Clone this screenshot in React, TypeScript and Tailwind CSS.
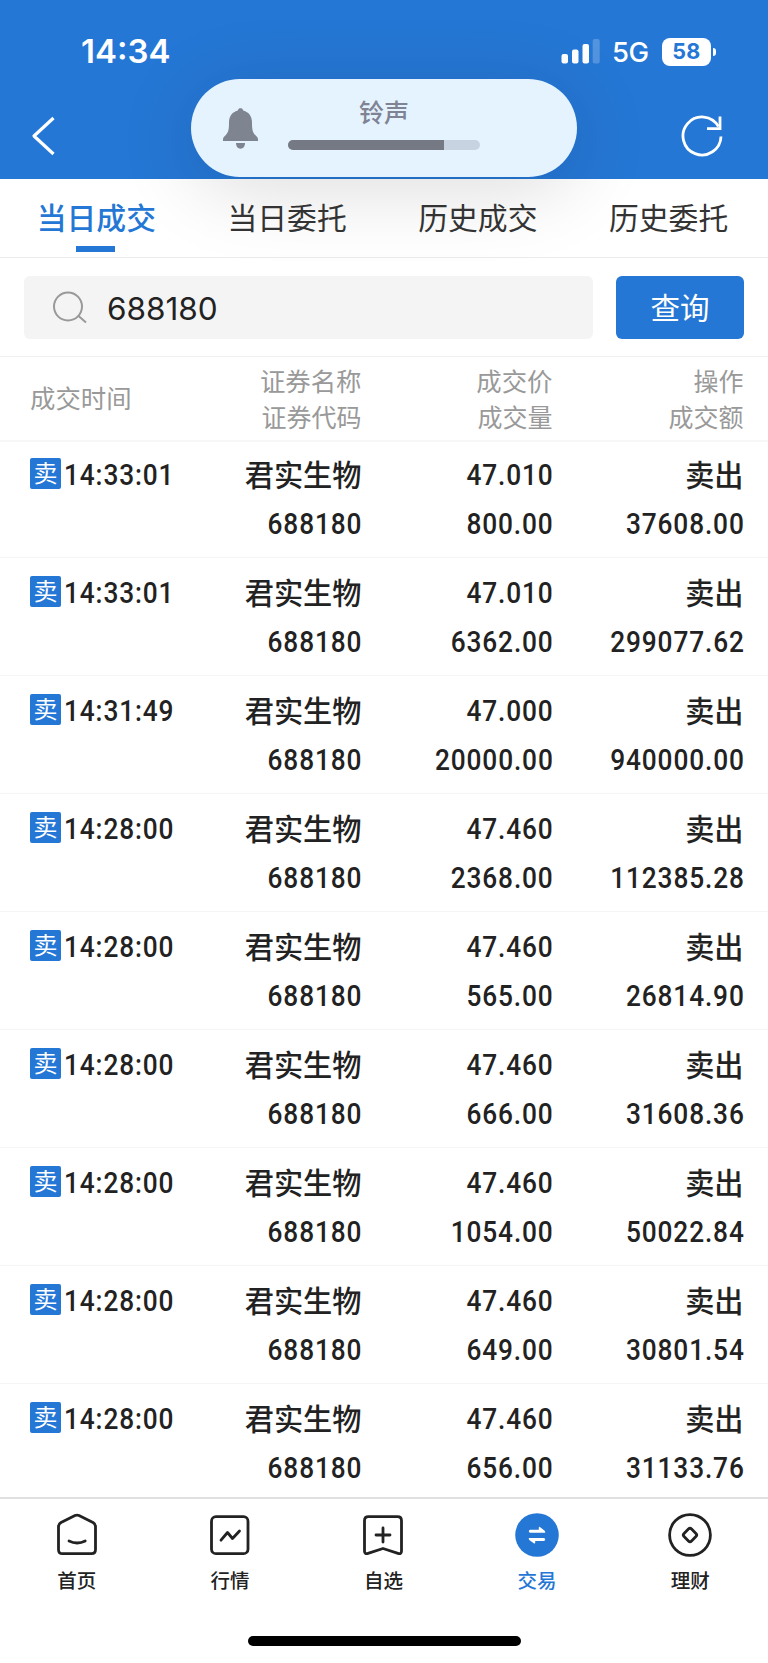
import React from 'react';

const trades = [
  { time: '14:33:01', price: '47.010', volume: '800.00', amount: '37608.00' },
  { time: '14:33:01', price: '47.010', volume: '6362.00', amount: '299077.62' },
  { time: '14:31:49', price: '47.000', volume: '20000.00', amount: '940000.00' },
  { time: '14:28:00', price: '47.460', volume: '2368.00', amount: '112385.28' },
  { time: '14:28:00', price: '47.460', volume: '565.00', amount: '26814.90' },
  { time: '14:28:00', price: '47.460', volume: '666.00', amount: '31608.36' },
  { time: '14:28:00', price: '47.460', volume: '1054.00', amount: '50022.84' },
  { time: '14:28:00', price: '47.460', volume: '649.00', amount: '30801.54' },
  { time: '14:28:00', price: '47.460', volume: '656.00', amount: '31133.76' },
];

const tabs = ['当日成交', '当日委托', '历史成交', '历史委托'];

const Num: React.FC<{ children: React.ReactNode; left?: boolean }> = ({ children, left }) => (
  <span
    className={`inline-block h-[49px] scale-x-[0.875] align-top font-['Roboto',sans-serif] text-[30px] font-medium leading-[51px] tracking-[1px] ${
      left ? 'origin-left' : '-mr-px origin-right'
    }`}
  >
    {children}
  </span>
);

const StatusBar: React.FC = () => (
  <div className="flex h-[79px] items-start justify-between pl-[81px] pr-[52px] pt-[31px] font-['Inter',sans-serif] text-white">
    <span className="text-[33px] font-semibold leading-[41px]">14:34</span>
    <div className="flex h-[41px] items-center">
      <svg width="39" height="25" viewBox="0 0 39 25" fill="currentColor" aria-hidden>
        <rect x="0.5" y="15" width="6.5" height="9.5" rx="2" />
        <rect x="11" y="10.5" width="6.5" height="14" rx="2" />
        <rect x="21.5" y="5" width="6.5" height="19.5" rx="2" />
        <rect x="31.7" y="0" width="7" height="24.5" rx="2" opacity="0.22" />
      </svg>
      <span className="ml-3 mt-0.5 w-[37px] text-[27.5px] font-medium leading-none tracking-[-0.5px]">5G</span>
      <div className="ml-[13px] flex h-7 w-[49px] items-center justify-center rounded-[8px] bg-white text-[21.5px] font-bold leading-none tracking-[0.3px] text-[#2577d5]">
        58
      </div>
      <div className="ml-0.5 h-2 w-[3px] rounded-r-full bg-white" />
    </div>
  </div>
);

const VolumePill: React.FC = () => (
  <div className="absolute left-[191px] top-[79px] z-10 flex h-[98px] w-[386px] rounded-[49px] bg-[#e5f3ff] shadow-[0_12px_80px_rgba(0,0,0,0.14)]">
    <svg className="ml-8 mt-[29px] shrink-0" width="35" height="41" viewBox="0 0 35 41" fill="#7f8491" aria-hidden>
      <path d="M14.8 2.5C15.2.8 16.2.2 17.500.2s2.300.6 2.700 2.300C26 4 29 8.500 29 14.500c0 8 .8 10.500 4.400 13.700 1.300 1.200 1.600 2.200 1.600 3.400v1.400H0v-1.400c0-1.200.3-2.200 1.600-3.400C5.200 25 6 22.500 6 14.500c0-6 3-10.500 8.800-12Z" />
      <path d="M13 35h9c0 3.500-1.800 5.700-4.500 5.700S13 38.500 13 35Z" />
    </svg>
    <div className="ml-[30px] w-[192px]">
      <div className="mt-[15px] text-center text-[25px] font-medium leading-[34px] text-[#7f8393]">铃声</div>
      <div className="mt-3 h-2.5 overflow-hidden rounded-full bg-[#c7d3e1]">
        <div className="h-full w-[156px] bg-[#747984]" />
      </div>
    </div>
  </div>
);

const HomeIcon = () => (
  <svg width="44" height="44" viewBox="0 0 44 44" fill="none" stroke="currentColor" strokeWidth="2.8" strokeLinejoin="round" strokeLinecap="round">
    <path d="M20 2.600Q22 1.600 24 2.600L38 9.500Q40.500 11 40.500 13.500V36.500Q40.500 40.700 36.500 40.700H7.500Q3.500 40.700 3.500 36.500V13.500Q3.500 11 6 9.500Z" />
    <path d="M14 28q8.200 4 16.200 0" />
  </svg>
);

const ChartIcon = () => (
  <svg width="44" height="44" viewBox="0 0 44 44" fill="none" stroke="currentColor" strokeWidth="2.8" strokeLinejoin="round" strokeLinecap="round">
    <rect x="3.5" y="3.7" width="36.5" height="37" rx="4.5" />
    <path d="M13 27.200l6.500-7.700 5 6 7-7.500" />
  </svg>
);

const WatchIcon = () => (
  <svg width="44" height="44" viewBox="0 0 44 44" fill="none" stroke="currentColor" strokeWidth="2.8" strokeLinejoin="round" strokeLinecap="round">
    <path d="M7.500 3.700H36.500Q40.500 3.700 40.500 7.700V38Q40.500 41.500 37 40.400L22 35.500 7 40.400Q3.500 41.500 3.500 38V7.700Q3.500 3.700 7.500 3.700Z" />
    <path d="M22 15v14M15 22h14" />
  </svg>
);

const TradeIcon = () => (
  <svg width="44" height="44" viewBox="0 0 44 44" fill="none">
    <circle cx="22" cy="22" r="21.8" fill="#2577d5" />
    <g fill="#fff">
      <path d="M15.200 16.700H23.800V14.600Q24 13.300 25.200 14.200L29.400 17.400Q30.300 18.300 30.300 19.700H15.200Q13.800 19.600 13.800 18.200T15.200 16.700Z" />
      <path d="M28.800 28.100H20.200V29.800Q20 31.100 18.800 30.200L14.600 27.200Q13.700 26.500 13.700 25.100H28.800Q30.200 25.200 30.200 26.600T28.800 28.100Z" />
    </g>
  </svg>
);

const WealthIcon = () => (
  <svg width="44" height="44" viewBox="0 0 44 44" fill="none" stroke="currentColor" strokeWidth="2.8" strokeLinejoin="round">
    <circle cx="22" cy="22" r="20.4" />
    <rect x="16.7" y="16.7" width="10.6" height="10.6" rx="2.2" transform="rotate(45 22 22)" />
  </svg>
);

const navItems = [
  { label: '首页', icon: <HomeIcon /> },
  { label: '行情', icon: <ChartIcon /> },
  { label: '自选', icon: <WatchIcon /> },
  { label: '交易', icon: <TradeIcon />, active: true },
  { label: '理财', icon: <WealthIcon /> },
];

export default function App() {
  return (
    <div className="relative flex h-[1663px] w-[768px] flex-col overflow-hidden bg-white font-['Noto_Sans_CJK_SC',sans-serif] text-[#222]">
      <header className="h-[179px] shrink-0 bg-[#2577d5]">
        <StatusBar />
        <div className="flex items-start justify-between pl-[31px] pr-11 pt-9 text-white">
          <svg width="24" height="42" viewBox="0 0 24 42" fill="none" stroke="currentColor" strokeWidth="3.2" aria-hidden>
            <path d="M22.500 3 3 21l19.500 18" strokeLinejoin="round" />
          </svg>
          <svg className="-mt-px" width="43" height="43" viewBox="0 0 43 43" fill="none" stroke="currentColor" strokeWidth="2.8" aria-hidden>
            <path d="M40 22.500A19 19 0 1 1 37.500 12.500" />
            <path d="M39 2.500v12.200H26" />
          </svg>
        </div>
      </header>

      <VolumePill />

      <nav className="grid h-[79px] shrink-0 grid-cols-4 border-b border-[#ebebeb] pl-px pr-1">
        {tabs.map((tab, i) => (
          <div
            key={tab}
            className={
              i === 0
                ? 'flex flex-col items-center text-[#2577d5] font-medium'
                : 'flex flex-col items-center text-[#333]'
            }
          >
            <span className="relative z-20 mt-3.5 text-[29.8px] leading-[46px]">{tab}</span>
            {i === 0 && <span className="-ml-0.5 mt-[7px] h-1.5 w-[39px] bg-[#2577d5]" />}
          </div>
        ))}
      </nav>

      <div className="flex h-[99px] shrink-0 gap-[23px] border-b border-[#f0f0f0] px-6 pt-[18px]">
        <div className="flex h-[63px] w-[569px] items-center rounded-[6px] bg-[#f4f4f4] pl-[29px]">
          <svg width="34" height="33" viewBox="0 0 34 33" fill="none" stroke="#999" strokeWidth="2" aria-hidden>
            <circle cx="15" cy="15.5" r="14" />
            <path d="M25 24.500l8 7" />
          </svg>
          <span className="ml-5 pt-0.5 font-['Inter',sans-serif] text-[31.5px] leading-none">688180</span>
        </div>
        <button className="h-[63px] w-32 rounded-[6px] bg-[#2577d5] pb-0.5 text-[29.5px] leading-none text-white">查询</button>
      </div>

      <div className="grid h-[85px] shrink-0 grid-cols-[180px_151.5px_191px_191px] border-b-2 border-[#f7f7f7] pl-[30px] pt-[5px] text-[25px] leading-9 text-[#999]">
        <div className="self-start pt-[17px] text-[25.4px]">成交时间</div>
        <div className="text-right">
          <div className="text-[25.4px]">证券名称</div>
          <div>证券代码</div>
        </div>
        <div className="text-right">
          <div className="text-[25.4px]">成交价</div>
          <div>成交量</div>
        </div>
        <div className="text-right">
          <div>操作</div>
          <div>成交额</div>
        </div>
      </div>

      <main className="min-h-0 flex-1 overflow-hidden">
        {trades.map((trade, i) => (
          <div
            key={i}
            className="grid h-[118px] grid-cols-[180px_151.5px_191px_191px] border-b border-[#f5f5f5] pl-[30px] pt-[9px] text-[29.2px] font-medium leading-[49px] first:h-[116px] first:pt-[7px]"
          >
            <div className="flex h-[49px] items-center gap-[3px]">
              <span className="flex size-[31px] shrink-0 items-center justify-center rounded-[2px] bg-[#2577d5] pb-[3px] text-[24px] font-normal leading-none text-white">
                卖
              </span>
              <Num left>{trade.time}</Num>
            </div>
            <div className="text-right">
              <div className="h-[49px]">君实生物</div>
              <div className="h-[49px]"><Num>688180</Num></div>
            </div>
            <div className="text-right">
              <div className="h-[49px]"><Num>{trade.price}</Num></div>
              <div className="h-[49px]"><Num>{trade.volume}</Num></div>
            </div>
            <div className="text-right">
              <div className="h-[49px]">卖出</div>
              <div className="h-[49px]"><Num>{trade.amount}</Num></div>
            </div>
          </div>
        ))}
      </main>

      <footer className="flex h-[166px] shrink-0 flex-col items-center border-t-2 border-[#e0e0e0] bg-white">
        <div className="grid w-full grid-cols-5 pr-px pt-3.5">
          {navItems.map((item) => (
            <div
              key={item.label}
              className={item.active ? 'flex flex-col items-center text-[#2577d5]' : 'flex flex-col items-center text-[#222]'}
            >
              {item.icon}
              <span className="mt-2 text-[19.5px] font-medium leading-[30px]">{item.label}</span>
            </div>
          ))}
        </div>
        <div className="mt-[41px] h-2.5 w-[273px] rounded-full bg-black" />
      </footer>
    </div>
  );
}
